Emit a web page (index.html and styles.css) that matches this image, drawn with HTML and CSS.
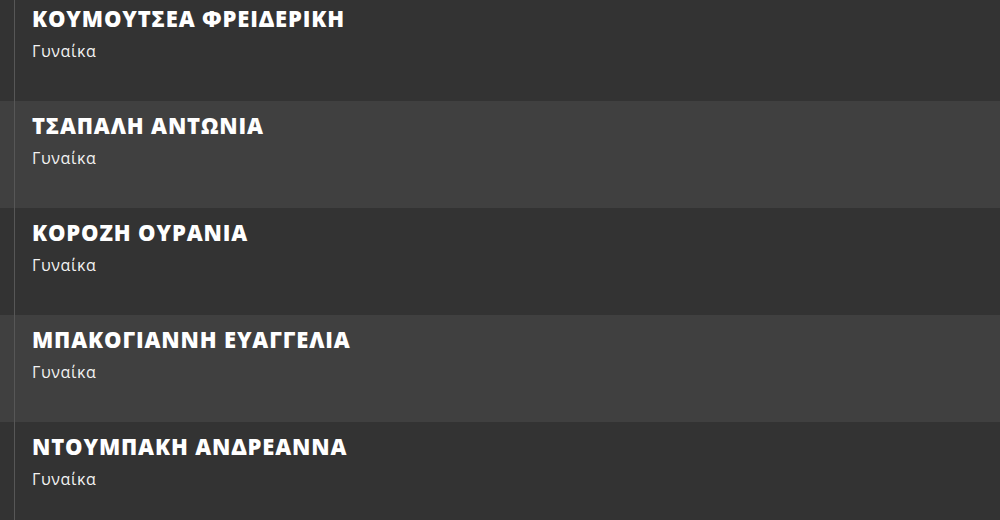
FILE: index.html
```html
<!DOCTYPE html>
<html lang="el">
<head>
<meta charset="utf-8">
<link rel="stylesheet" href="styles.css">
</head>
<body>
<div class="list">
  <div class="row dark"><div class="inner"><div class="name">ΚΟΥΜΟΥΤΣΕΑ ΦΡΕΙΔΕΡΙΚΗ</div><div class="sub">Γυναίκα</div></div></div>
  <div class="row light"><div class="inner"><div class="name">ΤΣΑΠΑΛΗ ΑΝΤΩΝΙΑ</div><div class="sub">Γυναίκα</div></div></div>
  <div class="row dark"><div class="inner"><div class="name">ΚΟΡΟΖΗ ΟΥΡΑΝΙΑ</div><div class="sub">Γυναίκα</div></div></div>
  <div class="row light"><div class="inner"><div class="name">ΜΠΑΚΟΓΙΑΝΝΗ ΕΥΑΓΓΕΛΙΑ</div><div class="sub">Γυναίκα</div></div></div>
  <div class="row dark"><div class="inner"><div class="name">ΝΤΟΥΜΠΑΚΗ ΑΝΔΡΕΑΝΝΑ</div><div class="sub">Γυναίκα</div></div></div>
</div>
</body>
</html>
```
FILE: styles.css
```css
html, body {
  margin: 0;
  padding: 0;
  background: #333333;
  overflow: hidden;
}
body {
  font-family: "Open Sans", "Noto Sans", sans-serif;
  color: #ffffff;
}
.list {
  margin-top: -6px;
}
.row {
  height: 107px;
  padding-left: 14px;
  box-sizing: border-box;
}
.row.dark { background: #333333; }
.row.light { background: #404040; }
.inner {
  height: 100%;
  border-left: 1px solid #575757;
  padding-left: 17px;
  padding-top: 10px;
  box-sizing: border-box;
}
.name {
  font-size: 22px;
  font-weight: 800;
  line-height: 29px;
  letter-spacing: 0.85px;
}
.sub {
  margin-top: 7px;
  font-size: 16px;
  line-height: 22px;
  letter-spacing: 0.6px;
  color: #f2f2f2;
}
```
